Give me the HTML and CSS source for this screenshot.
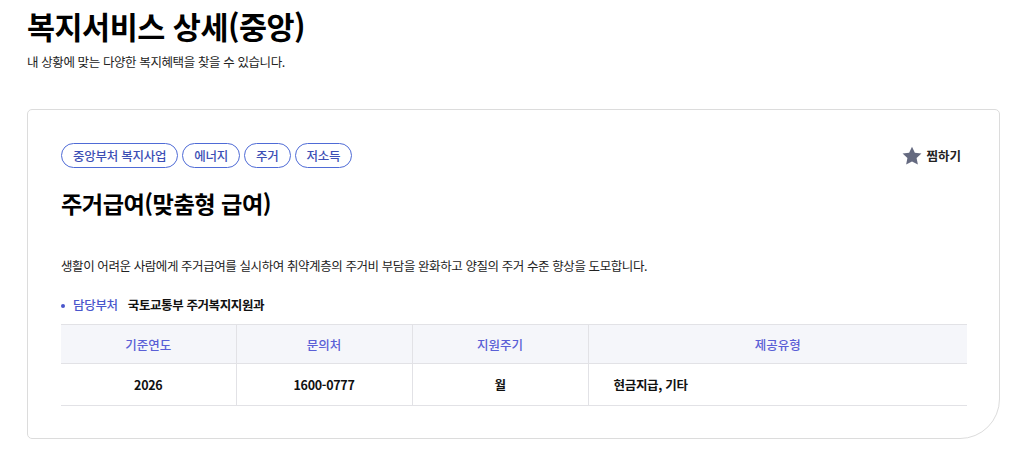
FILE: index.html
```html
<!DOCTYPE html>
<html lang="ko">
<head>
<meta charset="utf-8">
<title>복지서비스 상세(중앙)</title>
<link rel="stylesheet" href="styles.css">
</head>
<body>
<header class="page-head">
  <h1 class="page-title">복지서비스 상세(중앙)</h1>
  <p class="page-desc">내 상황에 맞는 다양한 복지혜택을 찾을 수 있습니다.</p>
</header>

<section class="card">
  <div class="card-top">
    <ul class="tags">
      <li class="tag">중앙부처 복지사업</li>
      <li class="tag">에너지</li>
      <li class="tag">주거</li>
      <li class="tag">저소득</li>
    </ul>
    <button class="fav" type="button">
      <svg class="fav-icon" viewBox="0 0 24 24" width="22" height="22" aria-hidden="true">
        <path d="M12 1.8l3.1 6.6 7.2.9-5.3 5 1.4 7.1L12 17.9l-6.4 3.5 1.4-7.1-5.3-5 7.2-.9z" fill="#656a80"/>
      </svg>
      <span>찜하기</span>
    </button>
  </div>

  <h2 class="card-title">주거급여(맞춤형 급여)</h2>

  <p class="card-desc">생활이 어려운 사람에게 주거급여를 실시하여 취약계층의 주거비 부담을 완화하고 양질의 주거 수준 향상을 도모합니다.</p>

  <dl class="dept">
    <dt>담당부처</dt>
    <dd>국토교통부 주거복지지원과</dd>
  </dl>

  <table class="info">
    <colgroup>
      <col class="c1"><col class="c2"><col class="c3"><col class="c4">
    </colgroup>
    <thead>
      <tr><th>기준연도</th><th>문의처</th><th>지원주기</th><th>제공유형</th></tr>
    </thead>
    <tbody>
      <tr><td>2026</td><td>1600-0777</td><td>월</td><td class="left">현금지급, 기타</td></tr>
    </tbody>
  </table>
</section>
</body>
</html>
```

FILE: styles.css
```css
* { box-sizing: border-box; }

body {
  margin: 0;
  padding: 0 11px 0 27px;
  font-family: "Noto Sans CJK KR", "Noto Sans", sans-serif;
  color: #111;
  background: #fff;
}

.page-head { padding-top: 4px; }

.page-title {
  margin: 0;
  font-size: 30.5px;
  font-weight: 700;
  line-height: 44px;
  letter-spacing: -0.5px;
  color: #000;
}

.page-desc {
  margin: 5px 0 0;
  font-size: 12.5px;
  line-height: 18px;
  color: #222;
  letter-spacing: -0.4px;
}

.card {
  margin-top: 38px;
  border: 1px solid #dcdcdc;
  border-radius: 5px 5px 40px 5px;
  padding: 33px 32px 32px 33px;
  width: 973px;
}

.card-top {
  display: flex;
  justify-content: space-between;
  align-items: center;
}

.tags {
  display: flex;
  gap: 4px;
  margin: 0;
  padding: 0;
  list-style: none;
}

.tag {
  height: 25px;
  padding: 0 11px;
  border: 1px solid #4f6bd6;
  border-radius: 13px;
  font-size: 12.5px;
  font-weight: 500;
  line-height: 23px;
  color: #3d4fb5;
  letter-spacing: -0.25px;
}

.fav {
  display: flex;
  align-items: center;
  gap: 3px;
  margin-right: 6px;
  padding: 0;
  border: 0;
  background: none;
  font-family: inherit;
  font-size: 12.5px;
  font-weight: 700;
  color: #222;
}

.card-title {
  margin: 19px 0 0;
  font-size: 23.2px;
  font-weight: 700;
  line-height: 32px;
  letter-spacing: -0.5px;
  color: #000;
}

.card-desc {
  margin: 38px 0 0;
  font-size: 12.5px;
  line-height: 18px;
  color: #222;
  letter-spacing: -0.42px;
}

.dept {
  display: flex;
  align-items: center;
  margin: 21px 0 0;
  font-size: 12.5px;
  line-height: 18px;
}

.dept dt {
  position: relative;
  padding-left: 12px;
  color: #4a56cc;
  font-weight: 500;
  letter-spacing: -0.3px;
}

.dept dt::before {
  content: "";
  position: absolute;
  left: 0;
  top: 8px;
  width: 4px;
  height: 4px;
  border-radius: 50%;
  background: #4a56cc;
}

.dept dd {
  margin: 0 0 0 10px;
  font-weight: 700;
  color: #111;
  letter-spacing: -0.4px;
}

.info {
  margin-top: 10px;
  width: 906px;
  border-collapse: collapse;
  font-size: 12.5px;
  table-layout: fixed;
}

.c1 { width: 175px; }
.c2 { width: 176px; }
.c3 { width: 176px; }

.info th {
  height: 39px;
  background: #f5f6fa;
  border-top: 1px solid #e2e2e6;
  border-bottom: 1px solid #e2e2e6;
  font-weight: 500;
  color: #5a5fd6;
}

.info th + th,
.info td + td { border-left: 1px solid #e2e2e6; }

.info td {
  height: 42px;
  text-align: center;
  font-weight: 700;
  color: #111;
  border-bottom: 1px solid #e2e2e6;
  letter-spacing: -0.3px;
}

.info td.left {
  text-align: left;
  padding-left: 25px;
}
```
